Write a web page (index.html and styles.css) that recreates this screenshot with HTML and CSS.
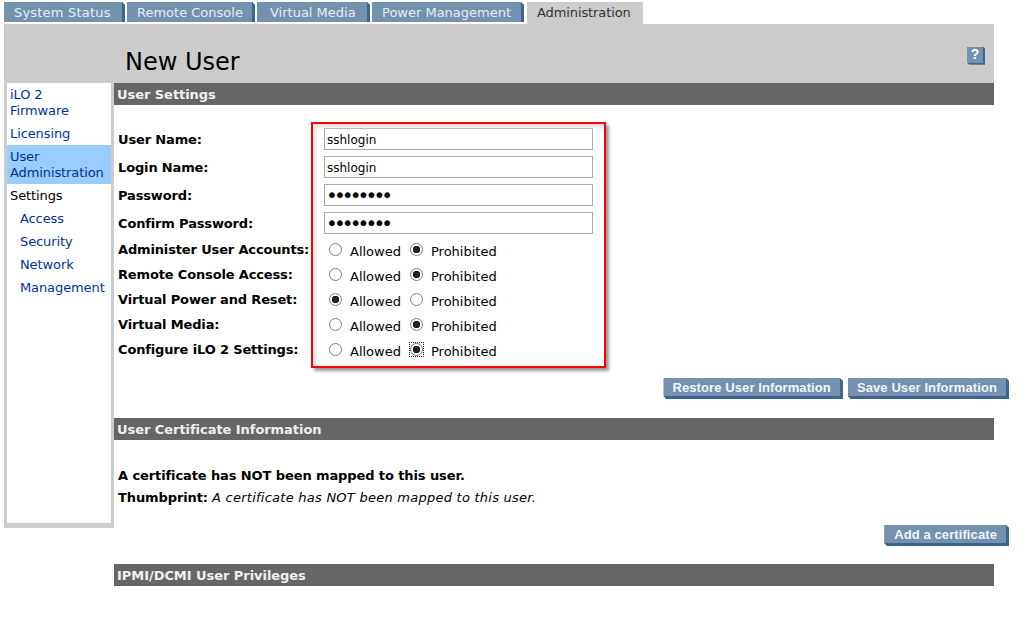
FILE: index.html
```html
<!DOCTYPE html>
<html lang="en">
<head>
    <meta charset="UTF-8">
    <title>New User</title>
    <link rel="stylesheet" href="styles.css">
</head>
<body>
    <div class="tabs">
        <a href="#" class="tab tab-status">System Status</a>
        <a href="#" class="tab tab-console">Remote Console</a>
        <a href="#" class="tab tab-media">Virtual Media</a>
        <a href="#" class="tab tab-power">Power Management</a>
        <a href="#" class="tab tab-active">Administration</a>
    </div>

    <div class="page-title">
        <h1>New User</h1>
        <a href="#" class="help-btn">?</a>
    </div>

    <div class="page-body">
        <div class="sidebar">
            <a href="#" class="nav-link">iLO 2<br>Firmware</a>
            <a href="#" class="nav-link">Licensing</a>
            <a href="#" class="nav-link selected">User<br>Administration</a>
            <div class="nav-heading">Settings</div>
            <a href="#" class="nav-link sub">Access</a>
            <a href="#" class="nav-link sub">Security</a>
            <a href="#" class="nav-link sub">Network</a>
            <a href="#" class="nav-link sub">Management</a>
        </div>

        <div class="main-content">
            <div class="section-bar">User Settings</div>

            <form class="user-form">
                <div class="highlight-box"></div>
                <div class="form-row">
                    <label class="field-label">User Name:</label>
                    <input class="text-field" type="text" value="sshlogin">
                </div>
                <div class="form-row">
                    <label class="field-label">Login Name:</label>
                    <input class="text-field" type="text" value="sshlogin">
                </div>
                <div class="form-row">
                    <label class="field-label">Password:</label>
                    <input class="text-field secret" type="password" value="password">
                </div>
                <div class="form-row">
                    <label class="field-label">Confirm Password:</label>
                    <input class="text-field secret" type="password" value="password">
                </div>
                <div class="radio-row">
                    <label class="field-label">Administer User Accounts:</label>
                    <span class="choice"><input type="radio" name="admin">Allowed</span>
                    <span class="choice"><input type="radio" name="admin" checked>Prohibited</span>
                </div>
                <div class="radio-row">
                    <label class="field-label">Remote Console Access:</label>
                    <span class="choice"><input type="radio" name="console">Allowed</span>
                    <span class="choice"><input type="radio" name="console" checked>Prohibited</span>
                </div>
                <div class="radio-row">
                    <label class="field-label">Virtual Power and Reset:</label>
                    <span class="choice"><input type="radio" name="power" checked>Allowed</span>
                    <span class="choice"><input type="radio" name="power">Prohibited</span>
                </div>
                <div class="radio-row">
                    <label class="field-label">Virtual Media:</label>
                    <span class="choice"><input type="radio" name="media">Allowed</span>
                    <span class="choice"><input type="radio" name="media" checked>Prohibited</span>
                </div>
                <div class="radio-row">
                    <label class="field-label">Configure iLO 2 Settings:</label>
                    <span class="choice"><input type="radio" name="config">Allowed</span>
                    <span class="choice"><input class="focused" type="radio" name="config" checked>Prohibited</span>
                </div>
            </form>

            <div class="button-row">
                <a href="#" class="action-btn">Restore User Information</a>
                <a href="#" class="action-btn">Save User Information</a>
            </div>

            <div class="section-bar cert-bar">User Certificate Information</div>
            <p class="cert-line strong">A certificate has NOT been mapped to this user.</p>
            <p class="cert-line"><b>Thumbprint:</b> <i>A certificate has NOT been mapped to this user.</i></p>

            <div class="button-row cert-buttons">
                <a href="#" class="action-btn">Add a certificate</a>
            </div>

            <div class="section-bar ipmi-bar">IPMI/DCMI User Privileges</div>
        </div>
    </div>
</body>
</html>
```

FILE: styles.css
```css
* {
    margin: 0;
    padding: 0;
    box-sizing: border-box;
}

body {
    font-family: "DejaVu Sans", Verdana, sans-serif;
    font-size: 13px;
    line-height: 16px;
    color: #000;
    background: #fff;
    overflow: hidden;
}

a {
    text-decoration: none;
}

.tabs {
    display: flex;
    gap: 2px;
    height: 24px;
    padding: 2px 0 0 4px;
}

.tab {
    height: 20px;
    padding: 3px 10px 0;
    color: #e6eef5;
    background: #7491af;
    border-right: 3px solid #3c6591;
    clip-path: polygon(0 0, calc(100% - 3px) 0, 100% 3px, 100% 100%, 0 100%);
    white-space: nowrap;
}

.tab-status { width: 121px; letter-spacing: 0.2px; }
.tab-console { width: 128px; }
.tab-media { width: 113px; padding-left: 13px; }
.tab-power { width: 152px; }

.tab.tab-active {
    width: 116px;
    height: 22px;
    margin-left: 1px;
    color: #333;
    letter-spacing: -0.1px;
    background: #ccc;
    border-right: 0;
    clip-path: none;
}

.page-title {
    display: flex;
    align-items: center;
    justify-content: space-between;
    width: 990px;
    height: 59px;
    margin-left: 4px;
    padding: 16px 9px 0 121px;
    background: #ccc;
}

.page-title h1 {
    font-size: 24px;
    font-weight: normal;
    line-height: 28px;
}

.help-btn {
    display: block;
    width: 18px;
    height: 18px;
    margin-top: -12px;
    color: #fff;
    font: bold 14px/15px "Liberation Sans", sans-serif;
    text-align: center;
    background: #7491af;
    border-right: 2px solid #3c6591;
    border-bottom: 2px solid #3c6591;
    clip-path: polygon(0 0, calc(100% - 2px) 0, 100% 2px, 100% 100%, 2px 100%, 0 calc(100% - 2px));
}

.page-body {
    display: flex;
    align-items: flex-start;
}

.sidebar {
    flex: none;
    width: 110px;
    height: 445px;
    margin-left: 4px;
    background: #fff;
    border-left: 3px solid #ccc;
    border-right: 3px solid #ccc;
    border-bottom: 5px solid #ccc;
}

.nav-link,
.nav-heading {
    display: block;
    padding: 4px 3px 3px;
    letter-spacing: -0.1px;
    white-space: nowrap;
}

.nav-link {
    color: #039;
}

.nav-link.sub {
    padding-left: 13px;
}

.nav-link.selected {
    background: #9cf;
}

.main-content {
    flex: none;
    width: 895px;
}

.section-bar {
    width: 880px;
    height: 22px;
    padding: 4px 3px 0;
    color: #f0f0f0;
    font-weight: bold;
    letter-spacing: -0.05px;
    background: #666;
}

.user-form {
    position: relative;
    margin: 23px 0 0 4px;
}

.highlight-box {
    position: absolute;
    top: -6px;
    left: 193px;
    width: 295px;
    height: 246px;
    border: 2px solid #f00;
    box-shadow: 3px 3px 3px #999, inset 3px 3px 4px #ddd;
    pointer-events: none;
}

.form-row {
    display: flex;
    align-items: center;
    height: 22px;
    margin-bottom: 6px;
}

.radio-row {
    display: flex;
    height: 25px;
}

.field-label {
    flex: none;
    width: 206px;
    font-weight: bold;
    letter-spacing: -0.15px;
    white-space: nowrap;
}

.form-row .field-label {
    padding-top: 2px;
}

.radio-row .field-label {
    padding-top: 2px;
}

.text-field {
    width: 269px;
    height: 22px;
    padding: 2px 2px 0;
    color: #000;
    font: 12px "DejaVu Sans", sans-serif;
    background: #fff;
    border: 1px solid #aaa;
    outline: none;
}

.text-field.secret {
    padding: 0 1px;
    font-size: 20px;
    letter-spacing: -3.9px;
}

.choice {
    display: flex;
    align-items: flex-start;
    padding-top: 4px;
}

.choice:first-of-type {
    width: 81px;
}

.choice input {
    appearance: none;
    flex: none;
    width: 13px;
    height: 13px;
    margin: 0 8px 0 5px;
    position: relative;
    top: -1px;
    background: #fff;
    border: 1px solid #808080;
    border-radius: 50%;
}

.choice input:checked {
    background: radial-gradient(circle, #222 0, #222 3.5px, #fff 4px);
}

.choice input.focused::after {
    content: "";
    position: absolute;
    inset: -2px;
    border: 1px dotted #222;
}

.button-row {
    display: flex;
    justify-content: flex-end;
    gap: 5px;
    margin-top: 13px;
}

.action-btn {
    height: 21px;
    padding: 1px 9px 0;
    color: #f2f6fa;
    font: bold 13px/17px "Liberation Sans", sans-serif;
    letter-spacing: 0.1px;
    background: #7491af;
    border-right: 3px solid #3c6591;
    border-bottom: 3px solid #3c6591;
    clip-path: polygon(0 0, calc(100% - 3px) 0, 100% 3px, 100% 100%, 3px 100%, 0 calc(100% - 3px));
    white-space: nowrap;
}

.cert-bar {
    margin-top: 19px;
    margin-bottom: 28px;
}

.cert-line {
    height: 22px;
    padding-left: 4px;
    letter-spacing: -0.1px;
    white-space: nowrap;
}

.cert-line.strong {
    font-weight: bold;
}

.cert-line i {
    letter-spacing: 0.25px;
}

.cert-buttons {
    margin-top: 13px;
}

.cert-buttons .action-btn {
    padding-left: 10px;
}

.ipmi-bar {
    margin-top: 18px;
}
```
